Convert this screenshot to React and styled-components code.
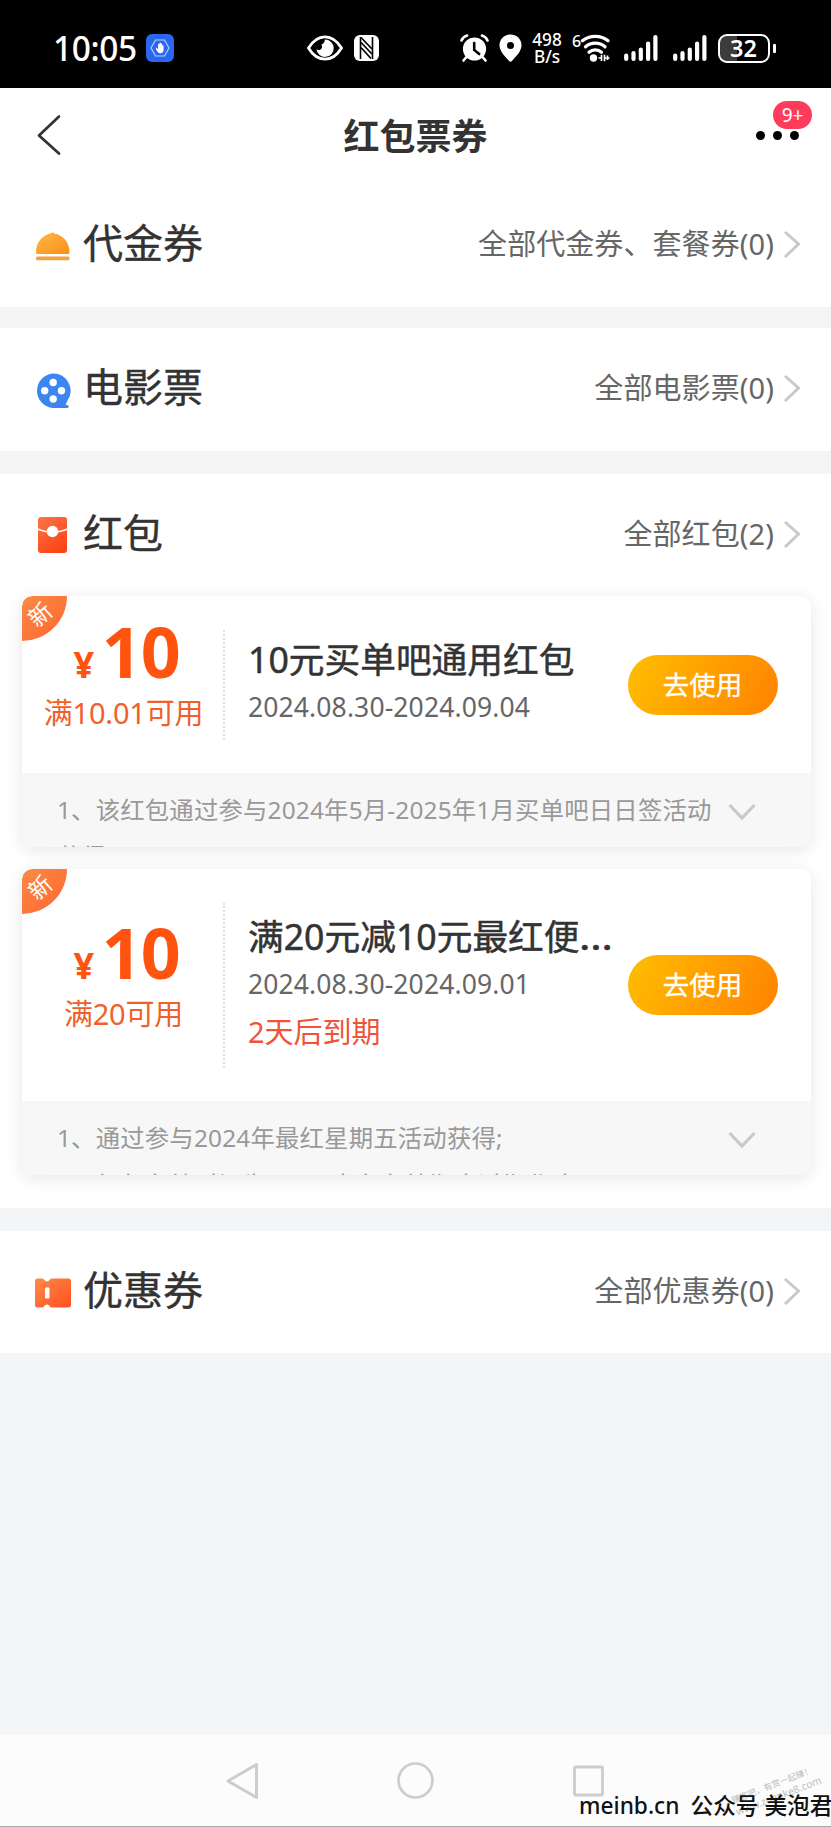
import React from 'react';
import styled, { createGlobalStyle } from 'styled-components';

const Global = createGlobalStyle`
  * { box-sizing: border-box; }
  body { margin: 0; background: #f4f5f7; }
  svg { display: block; flex: none; }
`;

const Screen = styled.div`
  position: relative;
  width: 831px;
  height: 1827px;
  overflow: hidden;
  display: flex;
  flex-direction: column;
  background: #f4f5f7;
  color: #333;
  font-family: 'Noto Sans', 'Noto Sans CJK SC', sans-serif;
  white-space: nowrap;
`;

/* ---------- status bar ---------- */
const StatusBar = styled.header`
  height: 88px;
  flex: none;
  background: #000;
  color: #fff;
  display: flex;
  align-items: center;
  padding: 8px 52px 0 53px;
`;
const Clock = styled.div`
  width: 93px;
  font-size: 33.5px;
  font-weight: 500;
  line-height: 40px;
  letter-spacing: -0.4px;
`;
const StatusGroup = styled.div`
  display: flex;
  align-items: center;
  gap: ${(p) => p.$gap}px;
  margin-left: ${(p) => p.$start || 0}px;
`;
const NetSpeed = styled.div`
  width: 30px;
  font-size: 17.2px;
  font-weight: 500;
  line-height: 17px;
  text-align: center;
`;
const Battery = styled.div`
  position: relative;
  width: 52px;
  height: 29px;
  border: 2px solid #fff;
  border-radius: 9px;
  background: linear-gradient(90deg, #3c3c3c 36%, #000 36%);
  font-size: 23.5px;
  font-weight: 600;
  line-height: 25px;
  text-align: center;
  &::after {
    content: '';
    position: absolute;
    right: -8px;
    top: 8px;
    width: 3px;
    height: 9px;
    border-radius: 1px;
    background: #fff;
  }
`;

/* ---------- title bar ---------- */
const TitleBar = styled.div`
  height: 96px;
  flex: none;
  background: #fff;
  display: grid;
  grid-template-columns: 120px 1fr 120px;
  align-items: center;
`;
const BackButton = styled.div`
  padding: 0 0 2px 36px;
`;
const PageTitle = styled.h1`
  margin: 2px 0 0;
  font-size: 36px;
  line-height: 48px;
  font-weight: 700;
  text-align: center;
`;
const MoreButton = styled.div`
  position: relative;
  display: flex;
  gap: 8.2px;
  padding: 0 0 2px 44.5px;
`;
const Dot = styled.i`
  width: 9px;
  height: 9px;
  border-radius: 50%;
  background: #000;
`;
const Count = styled.span`
  position: absolute;
  left: 62px;
  top: -30px;
  width: 39px;
  height: 28px;
  border-radius: 14px;
  background: #ff3b5b;
  color: #fff;
  font-size: 19px;
  line-height: 28px;
  text-align: center;
`;

/* ---------- sections ---------- */
const Section = styled.section`
  height: ${(p) => p.$height}px;
  flex: none;
  margin-bottom: ${(p) => p.$gap ?? 22}px;
  background: #fff;
`;
const SectionHead = styled.div`
  height: 118px;
  display: flex;
  align-items: center;
  padding: 0 30px 0 35px;
`;
const SectionTitle = styled.h2`
  flex: 1;
  margin: 0 0 0 12px;
  font-size: 40px;
  font-weight: 400;
  line-height: 54px;
  -webkit-text-stroke: 0.4px currentColor;
`;
const SectionLink = styled.span`
  margin: 2px 9px 0 0;
  font-size: 29px;
  line-height: 40px;
  letter-spacing: 0.08px;
  color: #666;
`;
const SectionIcon = styled.div`
  width: 36px;
  padding-top: ${(p) => p.$drop}px;
`;

/* ---------- coupon cards ---------- */
const CardList = styled.div`
  display: flex;
  flex-direction: column;
  gap: 22px;
  padding: 4px 20.5px 0 22px;
`;
const Card = styled.article`
  position: relative;
  overflow: hidden;
  border-radius: 10px;
`;
const CardShadow = styled.div`
  border-radius: 10px;
  box-shadow: 0 3px 17px rgba(0, 0, 0, 0.1);
`;
const CardBody = styled.div`
  height: ${(p) => p.$height}px;
  display: flex;
  align-items: center;
  padding-right: 33px;
  background: #fff;
`;
const Ribbon = styled.div`
  position: absolute;
  left: 0;
  top: 0;
  width: 45px;
  height: 45px;
  border-radius: 10px 0 45px 0;
  background: linear-gradient(135deg, #fb8a45, #ff6530);
  color: #fff;
`;
const RibbonText = styled.div`
  width: 36px;
  height: 37px;
  font-size: 23px;
  line-height: 37px;
  text-align: center;
  transform: rotate(-42deg);
`;
const Value = styled.div`
  width: 201px;
  padding-left: 2px;
  color: #ff5310;
  text-align: center;
`;
const Amount = styled.div`
  height: 56px;
  padding-left: 6px;
  font-size: 70px;
  line-height: 52px;
  font-weight: 700;
  letter-spacing: -1.2px;
`;
const Currency = styled.span`
  margin-right: 9px;
  font-size: 36px;
`;
const Condition = styled.div`
  height: 63px;
  font-size: 29px;
  line-height: 63px;
  letter-spacing: -0.2px;
  color: #f0602a;
`;
const Perforation = styled.div`
  width: 0;
  height: calc(100% - 67px);
  border-left: 2px dotted #dedede;
`;
const Info = styled.div`
  flex: 1;
  min-width: 0;
  padding: 0 0 3px 23px;
  line-height: 48px;
`;
const CouponName = styled.div`
  font-size: 35.7px;
  -webkit-text-stroke: 0.5px currentColor;
`;
const Ellipsis = styled.span`
  display: inline-block;
  transform: scaleX(1.2);
  transform-origin: left;
`;
const Period = styled.div`
  font-size: 26.5px;
  letter-spacing: 0.12px;
  color: #666;
`;
const Expiry = styled.div`
  font-size: 29px;
  line-height: 47px;
  color: #f0533a;
`;
const UseButton = styled.button`
  width: 150px;
  height: 60px;
  padding: 0;
  border: 0;
  border-radius: 30px;
  background: linear-gradient(115deg, #ffbb00 5%, #ff8800 90%);
  color: #fff;
  font: 400 26.5px/58px 'Noto Sans', 'Noto Sans CJK SC', sans-serif;
  -webkit-text-stroke: 0.3px currentColor;
`;
const Terms = styled.div`
  height: 74px;
  display: flex;
  justify-content: space-between;
  padding: 13px 55px 0 35px;
  background: #f7f7f7;
`;
const TermsText = styled.div`
  font-size: 24.4px;
  line-height: 47px;
  letter-spacing: 0.17px;
  color: #999;
`;
const Fold = styled.div`
  padding-top: 17px;
`;

/* ---------- system navigation ---------- */
const NavBar = styled.nav`
  height: 92px;
  margin-top: auto;
  display: flex;
  gap: 135px;
  padding: 27px 0 0 223.5px;
  background: #fcfcfc;
  border-bottom: 1px solid #a9a9ab;
`;
const SiteMark = styled.div`
  position: absolute;
  left: 579px;
  top: 1790px;
  color: #111;
  font-size: 22.7px;
  font-weight: 500;
  line-height: 32px;
`;
const SiteName = styled.span`
  margin-right: 11px;
`;
const StampMark = styled.div`
  position: absolute;
  left: 731px;
  top: 1778px;
  color: #bdbdbd;
  font-size: 8.6px;
  line-height: 12px;
  transform: rotate(-21deg);
`;
const StampUrl = styled.div`
  font-size: 10.3px;
`;

/* ---------- icons ---------- */
const HandIcon = () => (
  <svg width="28" height="28" viewBox="0 0 28 28">
    <rect width="28" height="28" rx="6" fill="#2a66f0" />
    <path d="M9.5 6h9l4.5 8-4.5 8h-9L5 14z" fill="none" stroke="#a9d4ff" strokeWidth="1.2" />
    <path d="M10.5 13.5l1.6 1.8V10.5a.7.7 0 0 1 1.4 0V9.3a.7.7 0 0 1 1.4 0v1a.7.7 0 0 1 1.4 0v1.4a.7.7 0 0 1 1.3 0V16c0 2-1.3 3.2-3 3.2-2.2 0-3-1-4.800-4.500z" fill="#fff" />
  </svg>
);
const EyeIcon = () => (
  <svg width="36" height="26" viewBox="0 0 36 26">
    <path d="M1.500 13C6 5.500 11.500 1.800 18 1.800S30 5.500 34.500 13C30 20.500 24.500 24.200 18 24.200S6 20.500 1.500 13z" fill="none" stroke="#fff" strokeWidth="2.800" />
    <path d="M18 4.500a8.700 8.700 0 1 1-8.600 9.800c2 1.200 4 .8 5-.6 1.200-1.600.6-3.200-.2-3.900C15.500 9.300 17.600 8 18 4.500z" fill="#fff" />
  </svg>
);
const NfcIcon = () => (
  <svg width="25" height="26" viewBox="0 0 25 26">
    <rect width="25" height="26" rx="6" fill="#fff" />
    <path d="M6.500 2v22M18.500 2v22" stroke="#000" strokeWidth="1.600" />
    <path d="M7 2.500l11 11.500M7 7.500l11 11.500M7 12.500l10 11" stroke="#000" strokeWidth="1.700" />
  </svg>
);
const AlarmIcon = () => (
  <svg width="29" height="28" viewBox="0 0 29 28">
    <circle cx="14.500" cy="15" r="11.600" fill="#fff" />
    <path d="M1.500 6.500C2.500 4 4.500 2.300 7 1.500M27.500 6.500C26.500 4 24.500 2.300 22 1.500M6 23.500l-2.500 3M23 23.500l2.500 3" stroke="#fff" strokeWidth="2.600" strokeLinecap="round" />
    <path d="M14.200 9v7l5 4" fill="none" stroke="#000" strokeWidth="2.600" strokeLinecap="round" />
  </svg>
);
const PinIcon = () => (
  <svg width="23" height="28" viewBox="0 0 23 28">
    <path fillRule="evenodd" d="M11.500.5C5.200.5.500 5.200.500 11.300c0 6 5.500 11.200 9.300 15.400a2.300 2.300 0 0 0 3.400 0c3.800-4.200 9.300-9.400 9.300-15.400C22.500 5.200 17.800.5 11.500.5zM11.500 8a3.500 3.500 0 1 1 0 7 3.500 3.500 0 0 1 0-7z" fill="#fff" />
  </svg>
);
const SixText = styled.span`
  width: 8px;
  margin: 0 -12px 14px 0;
  font-size: 16px;
  font-weight: 500;
  line-height: 16px;
`;
const WifiIcon = () => (
  <svg width="30" height="28" viewBox="0 0 30 28">
    <g fill="none" stroke="#fff" strokeWidth="3.200" strokeLinecap="round">
      <path d="M2.500 6.800c7-6 18.500-6 25.500 0" />
      <path d="M5.500 12.800c5.500-5 14-5 19.500 0" />
      <path d="M9 18.200c3.500-3 9-3 12.500 0" />
    </g>
    <circle cx="13.500" cy="24" r="3.700" fill="#fff" />
    <path d="M18.500 24h3v-3.200M21.500 24v3M24.500 20.800v6.500M24.500 24h5M27.500 21.500v4.500" fill="none" stroke="#fff" strokeWidth="1.700" />
  </svg>
);
const SignalIcon = () => (
  <svg width="34" height="28" viewBox="0 0 34 28">
    <path d="M2.200 21.500V25M9.500 19V25M16.800 15.500V25M24.100 9.500V25M31.400 3V25" stroke="#fff" strokeWidth="4.200" strokeLinecap="round" />
  </svg>
);
const BackIcon = () => (
  <svg width="26" height="42" viewBox="0 0 26 42">
    <path d="M23 2.500L3 21.500l20 18" fill="none" stroke="#333" strokeWidth="2.700" strokeLinecap="round" strokeLinejoin="round" />
  </svg>
);
const ArrowIcon = () => (
  <svg width="18" height="30" viewBox="0 0 18 30">
    <path d="M2 4l13.500 12L2 29" fill="none" stroke="#c9c9c9" strokeWidth="3" />
  </svg>
);
const FoldIcon = () => (
  <svg width="28" height="18" viewBox="0 0 28 18">
    <path d="M1.500 2l12.500 13L26.500 2" fill="none" stroke="#c8c8c8" strokeWidth="3" />
  </svg>
);
const DishIcon = () => (
  <svg width="36" height="30" viewBox="0 0 36 30">
    <defs>
      <linearGradient id="dish" x1="0" y1="0" x2="1" y2="1">
        <stop stopColor="#ffb84a" />
        <stop offset="1" stopColor="#fa8f14" />
      </linearGradient>
    </defs>
    <path d="M1 21.500C1 11 7.500 4 15.500 2.500a2.600 2.600 0 0 1 4 0C28 4 34.500 11 34.500 21.500a1.500 1.500 0 0 1-1.500 1.500H2.500A1.500 1.500 0 0 1 1 21.500z" fill="url(#dish)" />
    <rect x="1" y="25.500" width="33.500" height="3.700" rx="1.500" fill="#f1a13e" />
  </svg>
);
const ReelIcon = () => (
  <svg width="36" height="36" viewBox="0 0 36 36">
    <path d="M18 .5a17.300 17.300 0 0 1 14.500 27L30.500 32h1.700c2 0 2 3 0 3H18A17.300 17.300 0 0 1 18 .5z" fill="#3d86f2" />
    <g fill="#fff">
      <circle cx="18.200" cy="9.500" r="3.700" />
      <circle cx="9.700" cy="17.700" r="3.700" />
      <circle cx="26.500" cy="17.700" r="3.700" />
      <circle cx="18.200" cy="26" r="3.700" />
    </g>
  </svg>
);
const PacketIcon = () => (
  <svg width="36" height="36" viewBox="0 0 36 36">
    <defs>
      <linearGradient id="packet" x1="0" y1="0" x2="0.600" y2="1">
        <stop stopColor="#fb7648" />
        <stop offset="1" stopColor="#fb4519" />
      </linearGradient>
    </defs>
    <rect x="3" y="0" width="29" height="36" rx="3" fill="url(#packet)" />
    <path d="M2.500 12c9 4 21.500 4 30 0" fill="none" stroke="#fff" strokeWidth="1.800" />
    <circle cx="17.500" cy="14.500" r="5.700" fill="#fff" />
  </svg>
);
const TicketIcon = () => (
  <svg width="37" height="30" viewBox="0 0 37 30">
    <defs>
      <linearGradient id="ticket" x1="0" y1="0" x2="1" y2="1">
        <stop stopColor="#ff8a4a" />
        <stop offset="1" stopColor="#ff4f20" />
      </linearGradient>
    </defs>
    <path fillRule="evenodd" d="M2.500.5h5c1.500 0 2 3 4.500 3s3-3 4.500-3H33a3 3 0 0 1 3 3v23a3 3 0 0 1-3 3H16.500c-1.500 0-2-3-4.500-3s-3 3-4.500 3h-5a2.500 2.500 0 0 1-2.500-2.500V3A2.500 2.500 0 0 1 2.500.5zM10 10.500v9a1 1 0 0 0 1 1h2.500a1 1 0 0 0 1-1v-9a1 1 0 0 0-1-1H11a1 1 0 0 0-1 1z" fill="url(#ticket)" />
  </svg>
);
const NavBackIcon = () => (
  <svg width="38" height="38" viewBox="0 0 38 38">
    <path d="M4 19L32.500 2.500v33z" fill="none" stroke="#cdcdcd" strokeWidth="3" strokeLinejoin="round" />
  </svg>
);
const NavHomeIcon = () => (
  <svg width="41" height="38" viewBox="0 0 41 38">
    <circle cx="18.500" cy="18.500" r="17" fill="none" stroke="#cdcdcd" strokeWidth="2.700" />
  </svg>
);
const NavRecentIcon = () => (
  <svg width="32" height="38" viewBox="0 0 32 38">
    <rect x="1.500" y="5" width="28" height="28" rx="1" fill="none" stroke="#cdcdcd" strokeWidth="2.800" />
  </svg>
);

const Head = ({ icon, drop, title, link }) => (
  <SectionHead>
    <SectionIcon $drop={drop}>{icon}</SectionIcon>
    <SectionTitle>{title}</SectionTitle>
    <SectionLink>{link}</SectionLink>
    <ArrowIcon />
  </SectionHead>
);

const Coupon = ({ height, condition, name, clipped, period, expiry, terms }) => (
  <CardShadow>
    <Card>
      <CardBody $height={height}>
        <Value>
          <Amount>
            <Currency>¥</Currency>10
          </Amount>
          <Condition>{condition}</Condition>
        </Value>
        <Perforation />
        <Info>
          <CouponName>
            {name}
            {clipped && <Ellipsis>…</Ellipsis>}
          </CouponName>
          <Period>{period}</Period>
          {expiry && <Expiry>{expiry}</Expiry>}
        </Info>
        <UseButton>去使用</UseButton>
      </CardBody>
      <Terms>
        <TermsText>
          {terms.map((line) => (
            <div key={line}>{line}</div>
          ))}
        </TermsText>
        <Fold>
          <FoldIcon />
        </Fold>
      </Terms>
      <Ribbon>
        <RibbonText>新</RibbonText>
      </Ribbon>
    </Card>
  </CardShadow>
);

export default function App() {
  return (
    <Screen>
      <Global />
      <StatusBar>
        <Clock>10:05</Clock>
        <HandIcon />
        <StatusGroup $gap={11} $start={133}>
          <EyeIcon />
          <NfcIcon />
        </StatusGroup>
        <StatusGroup $gap={10} $start={81}>
          <AlarmIcon />
          <PinIcon />
          <NetSpeed>
            498
            <br />
            B/s
          </NetSpeed>
          <StatusGroup $gap={12}>
            <SixText>6</SixText>
            <WifiIcon />
          </StatusGroup>
        </StatusGroup>
        <StatusGroup $gap={15} $start={14}>
          <SignalIcon />
          <SignalIcon />
        </StatusGroup>
        <StatusGroup $start={10.5}>
          <Battery>32</Battery>
        </StatusGroup>
      </StatusBar>

      <TitleBar>
        <BackButton>
          <BackIcon />
        </BackButton>
        <PageTitle>红包票券</PageTitle>
        <MoreButton>
          <Dot />
          <Dot />
          <Dot />
          <Count>9+</Count>
        </MoreButton>
      </TitleBar>

      <Section $height={122.5} $gap={21.5}>
        <Head icon={<DishIcon />} drop={6} title="代金券" link="全部代金券、套餐券(0)" />
      </Section>
      <Section $height={123} $gap={23}>
        <Head icon={<ReelIcon />} drop={7} title="电影票" link="全部电影票(0)" />
      </Section>
      <Section $height={734} $gap={23}>
        <Head icon={<PacketIcon />} drop={4} title="红包" link="全部红包(2)" />
        <CardList>
          <Coupon
            height={177}
            condition="满10.01可用"
            name="10元买单吧通用红包"
            period="2024.08.30-2024.09.04"
            terms={['1、该红包通过参与2024年5月-2025年1月买单吧日日签活动', '获得;']}
          />
          <Coupon
            height={232}
            condition="满20可用"
            name="满20元减10元最红便"
            clipped
            period="2024.08.30-2024.09.01"
            expiry="2天后到期"
            terms={['1、通过参与2024年最红星期五活动获得;', '2、红包有效时间为2天，未在有效期内过期作废;']}
          />
        </CardList>
      </Section>
      <Section $height={122} $gap={0}>
        <Head icon={<TicketIcon />} drop={5} title="优惠券" link="全部优惠券(0)" />
      </Section>

      <NavBar>
        <NavBackIcon />
        <NavHomeIcon />
        <NavRecentIcon />
      </NavBar>
      <StampMark>
        赚客吧，有赏一起赚！
        <StampUrl>www.zuanke8.com</StampUrl>
      </StampMark>
      <SiteMark>
        <SiteName>meinb.cn</SiteName>公众号 美泡君
      </SiteMark>
    </Screen>
  );
}
